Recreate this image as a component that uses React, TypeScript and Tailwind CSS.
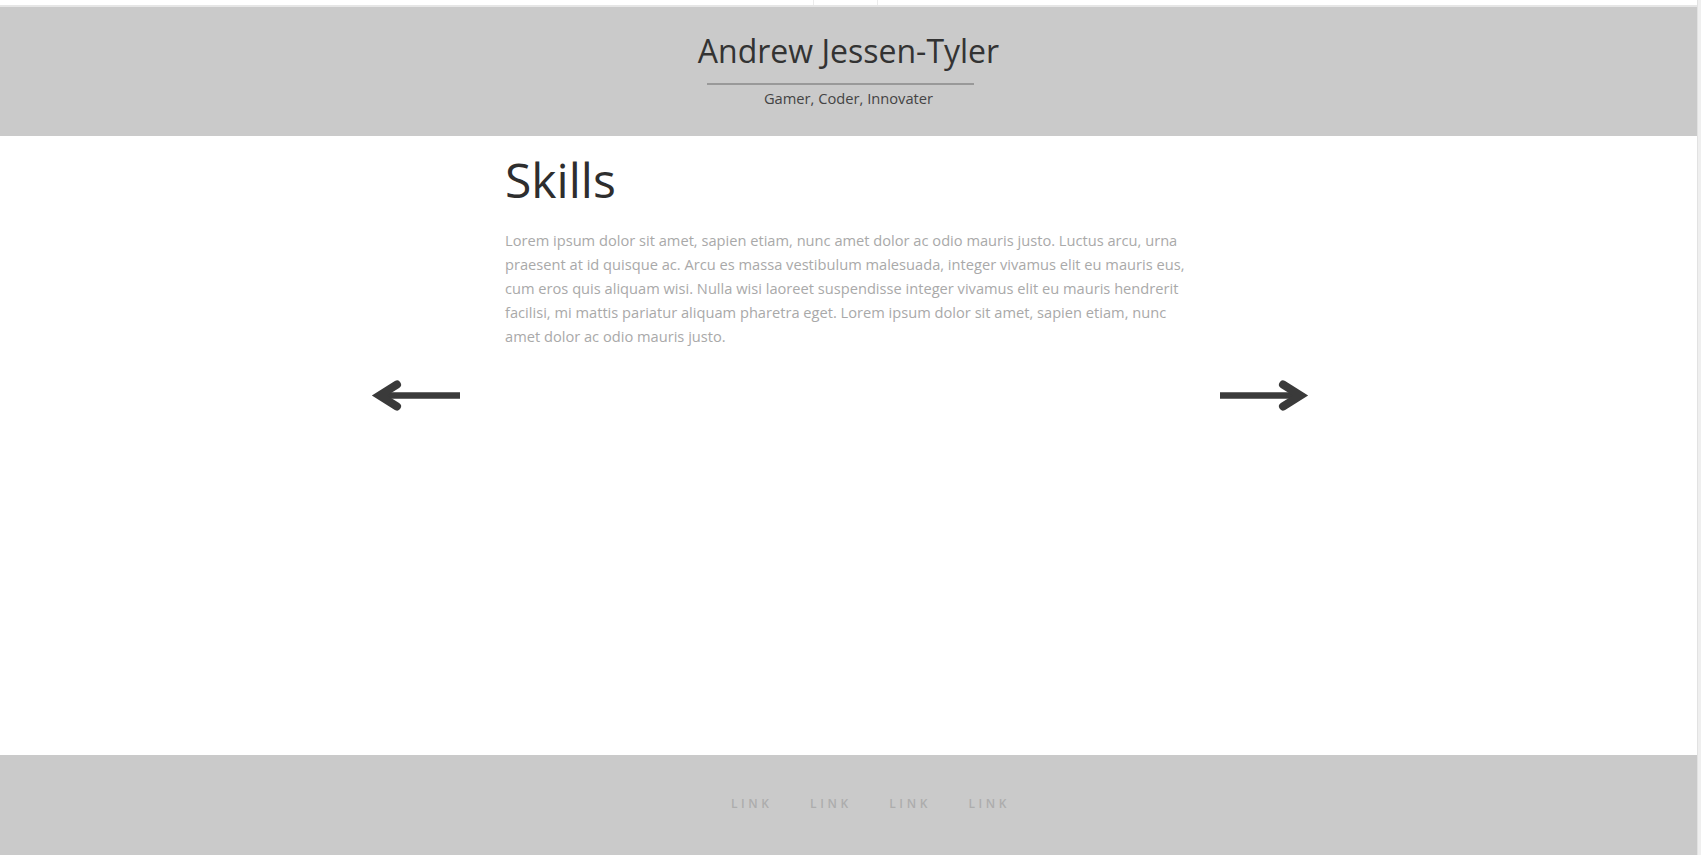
import React from 'react';

const ArrowLeft: React.FC = () => (
  <svg width="90" height="35" viewBox="0 0 90 35" className="shrink-0 text-[#3a3a3a]">
    <line x1="12" y1="17.5" x2="89" y2="17.5" stroke="currentColor" strokeWidth="6.7" />
    <path
      d="M26 6.5 L8.4 17.5 L26 28.5"
      fill="none"
      stroke="currentColor"
      strokeWidth="8"
      strokeLinecap="round"
      strokeLinejoin="miter"
    />
  </svg>
);

const ArrowRight: React.FC = () => (
  <svg width="90" height="35" viewBox="0 0 90 35" className="shrink-0 text-[#3a3a3a]">
    <line x1="1" y1="17.5" x2="78" y2="17.5" stroke="currentColor" strokeWidth="6.7" />
    <path
      d="M64 6.5 L81.6 17.5 L64 28.5"
      fill="none"
      stroke="currentColor"
      strokeWidth="8"
      strokeLinecap="round"
      strokeLinejoin="miter"
    />
  </svg>
);

const App: React.FC = () => {
  return (
    <div className="flex h-[855px] w-full overflow-hidden bg-white font-['Open_Sans',sans-serif]">
      <div className="flex min-w-0 flex-1 flex-col">
        {/* browser chrome strip */}
        <div className="flex h-[5px] bg-white">
          <div className="w-[813px]" />
          <div className="w-px bg-[#ececec]" />
          <div className="w-[63px]" />
          <div className="w-px bg-[#ececec]" />
        </div>
        <div className="h-[2px] bg-[#e6e6e6]" />

        {/* header */}
        <header className="flex h-[129px] flex-col items-center bg-[#cacaca] pt-[24px]">
          <h1 className="text-[32px] leading-[40px] font-normal text-[#333]">Andrew Jessen-Tyler</h1>
          <div className="mt-[12px] mr-[16px] h-[2px] w-[267px] bg-[#999]" />
          <p className="mt-[3px] text-[14.7px] leading-[20px] text-[#444]">Gamer, Coder, Innovater</p>
        </header>

        {/* carousel */}
        <main className="flex flex-1 justify-center pt-[16px] pr-[17px]">
          <div className="mt-[226px]">
            <ArrowLeft />
          </div>
          <section className="ml-[44px] mr-[28px] w-[686px]">
            <h2 className="text-[48px] leading-[56px] font-normal text-[#2e2e2e]">Skills</h2>
            <p className="mt-[20px] text-[14.65px] leading-[24px] text-[#a9a9a9]">
              Lorem ipsum dolor sit amet, sapien etiam, nunc amet dolor ac odio mauris justo. Luctus arcu, urna
              praesent at id quisque ac. Arcu es massa vestibulum malesuada, integer vivamus elit eu mauris eus,
              cum eros quis aliquam wisi. Nulla wisi laoreet suspendisse integer vivamus elit eu mauris hendrerit
              facilisi, mi mattis pariatur aliquam pharetra eget. Lorem ipsum dolor sit amet, sapien etiam, nunc
              amet dolor ac odio mauris justo.
            </p>
          </section>
          <div className="mt-[226px]">
            <ArrowRight />
          </div>
        </main>

        {/* footer */}
        <footer className="h-[100px] bg-[#cacaca] pt-[35px]">
          <ul className="flex justify-center gap-[37.5px] pl-[44px]">
            {['LINK', 'LINK', 'LINK', 'LINK'].map((label, i) => (
              <li key={i}>
                <a className="text-[12px] leading-[16px] font-semibold tracking-[0.3em] text-[#adadad]">{label}</a>
              </li>
            ))}
          </ul>
        </footer>
      </div>
      {/* scrollbar track */}
      <div className="w-[4px] border-l border-[#e2e2e2] bg-[#efefef]" />
    </div>
  );
};

export default App;
